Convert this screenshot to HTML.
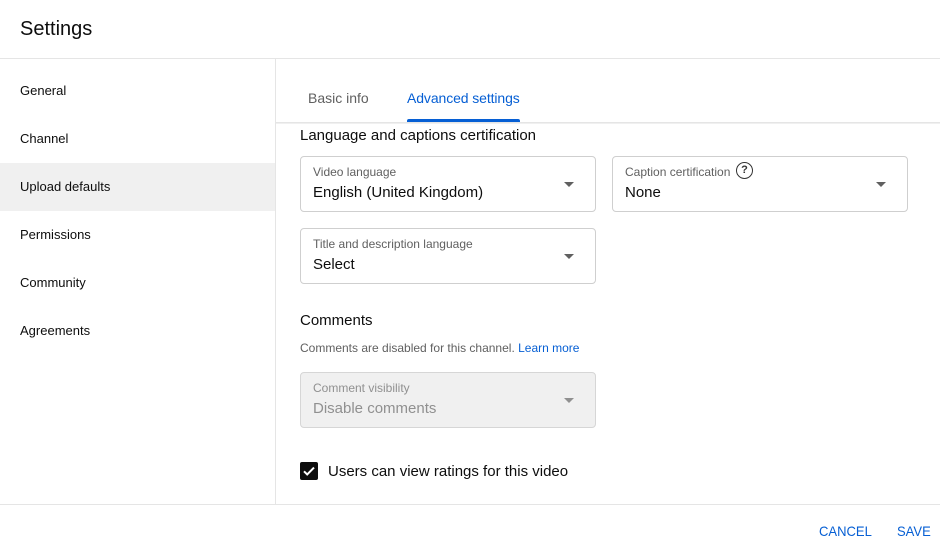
<!DOCTYPE html>
<html><head><meta charset="utf-8"><style>
*{box-sizing:border-box;margin:0;padding:0}
body{width:940px;height:549px;background:#fff;font-family:"Liberation Sans",Arial,sans-serif;color:#0d0d0d;position:relative;overflow:hidden}
.a{position:absolute}
.nav{left:20px;font-size:13px;color:#0d0d0d}
.box{border:1px solid #cfcfcf;border-radius:4px;height:56px}
.lbl{position:absolute;left:12px;top:8px;font-size:12px;color:#606060}
.val{position:absolute;left:12px;top:27px;font-size:15px;color:#0d0d0d}
.arr{position:absolute;right:21px;top:25px;width:0;height:0;border-left:5px solid transparent;border-right:5px solid transparent;border-top:5px solid #606060}
</style></head><body>
<div class="a" style="left:20px;top:18px;font-size:20px;color:#0d0d0d">Settings</div>
<div class="a" style="left:0;top:58px;width:940px;height:1px;background:#e5e5e5"></div>
<div class="a" style="left:275px;top:59px;width:1px;height:445px;background:#e5e5e5"></div>
<div class="a" style="left:0;top:163px;width:275px;height:48px;background:#f0f0f0"></div>
<div class="a nav" style="top:83px">General</div>
<div class="a nav" style="top:131px">Channel</div>
<div class="a nav" style="top:179px">Upload defaults</div>
<div class="a nav" style="top:227px">Permissions</div>
<div class="a nav" style="top:275px">Community</div>
<div class="a nav" style="top:323px">Agreements</div>

<div class="a" style="left:308px;top:90px;font-size:14px;color:#606060">Basic info</div>
<div class="a" style="left:407px;top:90px;font-size:14px;color:#065fd4;letter-spacing:-0.1px">Advanced settings</div>
<div class="a" style="left:407px;top:119px;width:113px;height:3px;background:#065fd4;border-radius:2px 2px 0 0"></div>
<div class="a" style="left:276px;top:122px;width:664px;height:2px;background:linear-gradient(#e0e0e0,#f6f6f6)"></div>

<div class="a" style="left:300px;top:127px;font-size:15px;color:#0d0d0d">Language and captions certification</div>
<div class="a box" style="left:300px;top:156px;width:296px"><div class="lbl">Video language</div><div class="val">English (United Kingdom)</div><div class="arr"></div></div>
<div class="a box" style="left:612px;top:156px;width:296px"><div class="lbl">Caption certification</div><span class="a" style="left:123px;top:5px;width:17px;height:17px;border:1.6px solid #333;border-radius:50%;font-size:11px;line-height:14px;text-align:center;color:#333;font-weight:bold">?</span><div class="val">None</div><div class="arr"></div></div>
<div class="a box" style="left:300px;top:228px;width:296px"><div class="lbl">Title and description language</div><div class="val">Select</div><div class="arr"></div></div>

<div class="a" style="left:300px;top:312px;font-size:15px;color:#0d0d0d">Comments</div>
<div class="a" style="left:300px;top:341px;font-size:12px;color:#606060">Comments are disabled for this channel. <span style="color:#065fd4">Learn more</span></div>
<div class="a box" style="left:300px;top:372px;width:296px;background:#f0f0f0;border-color:#d6d6d6"><div class="lbl" style="color:#909090">Comment visibility</div><div class="val" style="color:#909090">Disable comments</div><div class="arr" style="border-top-color:#909090"></div></div>

<div class="a" style="left:300px;top:462px;width:18px;height:18px;background:#0d0d0d;border-radius:2px">
<svg width="18" height="18" viewBox="0 0 18 18"><path d="M4 9.3l3.2 3.2L14 5.6" stroke="#fff" stroke-width="2" fill="none"/></svg></div>
<div class="a" style="left:328px;top:463px;font-size:15px;color:#0d0d0d">Users can view ratings for this video</div>

<div class="a" style="left:0;top:504px;width:940px;height:1px;background:#e5e5e5"></div>
<div class="a" style="left:819px;top:523px;font-size:14px;color:#065fd4;transform:scaleX(0.93);transform-origin:left">CANCEL</div>
<div class="a" style="left:897px;top:523px;font-size:14px;color:#065fd4;transform:scaleX(0.93);transform-origin:left">SAVE</div>
</body></html>
